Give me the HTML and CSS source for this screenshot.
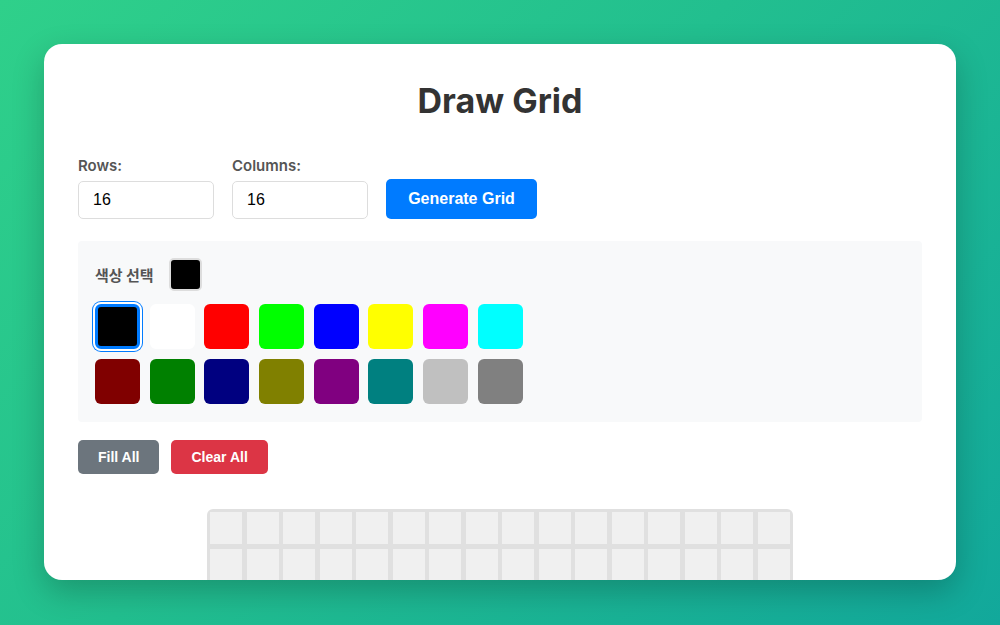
FILE: index.html
```html
<!DOCTYPE html>
<html lang="en">
<head>
  <meta charset="UTF-8" />
  <meta name="viewport" content="width=device-width, initial-scale=1.0"/>
  <title>Draw Grid</title>
  <link rel="stylesheet" href="styles.css">
</head>
<body>
  <div class="window">
    <h1>Draw Grid</h1>
    <div class="controls">
      <div class="field">
        <label for="rows">Rows:</label>
        <input type="number" id="rows" value="16">
      </div>
      <div class="field">
        <label for="cols">Columns:</label>
        <input type="number" id="cols" value="16">
      </div>
      <button class="btn btn-primary" onclick="makeGrid()">Generate Grid</button>
    </div>

    <div class="palette">
      <div class="picker-row">
        <span class="picker-label">색상 선택</span>
        <span class="current" id="current"></span>
      </div>
      <div class="swatches" id="swatches"></div>
    </div>

    <div class="actions">
      <button class="btn btn-gray" onclick="fillAll()">Fill All</button>
      <button class="btn btn-red" onclick="clearAll()">Clear All</button>
    </div>

    <div class="grid" id="grid"></div>
  </div>

  <script>
    const colors = [
      '#000000', '#ffffff', '#ff0000', '#00ff00', '#0000ff', '#ffff00', '#ff00ff', '#00ffff',
      '#800000', '#008000', '#000080', '#808000', '#800080', '#008080', '#c0c0c0', '#808080'
    ];
    let current = colors[0];

    const swatches = document.getElementById('swatches');
    colors.forEach((c, i) => {
      const s = document.createElement('div');
      s.className = 'swatch' + (i === 0 ? ' active' : '');
      s.style.background = c;
      s.onclick = () => {
        document.querySelectorAll('.swatch').forEach(x => x.classList.remove('active'));
        s.classList.add('active');
        current = c;
        document.getElementById('current').style.background = c;
      };
      swatches.appendChild(s);
    });

    function makeGrid() {
      const rows = +document.getElementById('rows').value;
      const cols = +document.getElementById('cols').value;
      const grid = document.getElementById('grid');
      grid.innerHTML = '';
      grid.style.gridTemplateColumns = `repeat(${cols}, 32px)`;
      for (let i = 0; i < rows * cols; i++) {
        const cell = document.createElement('div');
        cell.className = 'cell';
        cell.onclick = () => cell.style.background = current;
        grid.appendChild(cell);
      }
    }

    function fillAll() {
      document.querySelectorAll('.cell').forEach(c => c.style.background = current);
    }

    function clearAll() {
      document.querySelectorAll('.cell').forEach(c => c.style.background = '');
    }

    makeGrid();
  </script>
</body>
</html>
```

FILE: styles.css
```css
html, body {
  margin: 0;
  height: 100%;
}
body {
  background: linear-gradient(135deg, #2fd08a 0%, #22bf8f 45%, #12a89b 100%);
  font-family: Inter, 'Liberation Sans', sans-serif;
  overflow: hidden;
  padding: 44px;
  box-sizing: border-box;
}
.window {
  background: #fff;
  border-radius: 18px;
  height: 536px;
  overflow: hidden;
  padding: 36px 34px 0;
  box-sizing: border-box;
  box-shadow: 0 12px 32px rgba(0, 0, 0, 0.22);
}
h1 {
  margin: 0;
  text-align: center;
  font-size: 34px;
  line-height: 41px;
  font-weight: 700;
  color: #333;
}
.controls {
  display: flex;
  align-items: flex-end;
  gap: 18px;
  margin-top: 36px;
}
.field label {
  display: block;
  font-size: 15px;
  line-height: 18px;
  font-weight: 600;
  color: #555;
  margin-bottom: 6px;
}
.field input {
  width: 136px;
  height: 38px;
  box-sizing: border-box;
  border: 1px solid #ddd;
  border-radius: 5px;
  padding: 0 14px;
  font-family: 'Liberation Sans', Arial, sans-serif;
  font-size: 16px;
  color: #000;
  -moz-appearance: textfield;
}
.field input::-webkit-inner-spin-button {
  -webkit-appearance: none;
}
.btn {
  border: none;
  border-radius: 5px;
  color: #fff;
  font-family: 'Liberation Sans', Arial, sans-serif;
  font-weight: 700;
  cursor: pointer;
}
.btn-primary {
  background: #007bff;
  height: 40px;
  width: 151px;
  font-size: 16px;
}
.palette {
  margin-top: 22px;
  background: #f8f9fa;
  border-radius: 4px;
  padding: 17px 17px 18px;
}
.picker-row {
  display: flex;
  align-items: center;
  gap: 15px;
  height: 33px;
}
.picker-label {
  font-size: 15px;
  font-weight: 700;
  color: #555;
  font-family: 'Noto Sans CJK KR', sans-serif;
}
.current {
  width: 33px;
  height: 33px;
  box-sizing: border-box;
  border: 2px solid #ddd;
  border-radius: 5px;
  background: #000;
}
.swatches {
  display: grid;
  grid-template-columns: repeat(8, 45px);
  gap: 10px 9.7px;
  margin-top: 13px;
}
.swatch {
  width: 45px;
  height: 45px;
  border-radius: 6px;
  cursor: pointer;
  box-sizing: border-box;
}
.swatch.active {
  border: 3px solid #007bff;
  box-shadow: 0 0 0 2px #fff, 0 0 0 3px #007bff;
}
.actions {
  display: flex;
  gap: 12px;
  margin-top: 18px;
}
.btn-gray, .btn-red {
  height: 34px;
  font-size: 14px;
  padding: 0 20px;
}
.btn-gray {
  background: #6c757d;
}
.btn-red {
  background: #dc3545;
}
.grid {
  display: grid;
  gap: 4.5px;
  width: max-content;
  margin: 35px auto 0;
  padding: 3px;
  background: #e0e0e0;
  border-radius: 6px;
}
.cell {
  width: 32px;
  height: 32px;
  background: #f0f0f0;
  cursor: pointer;
}
```
